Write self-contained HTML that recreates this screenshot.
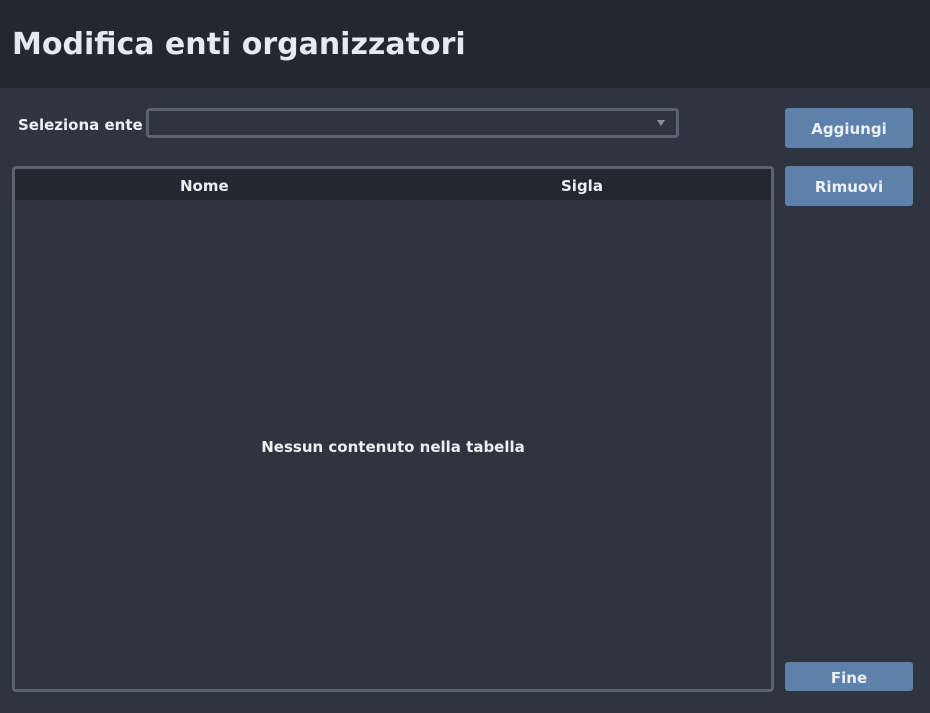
<!DOCTYPE html>
<html><head><meta charset="utf-8"><style>
*{margin:0;padding:0;box-sizing:border-box}
body{width:930px;height:713px;background:#2e3440;font-family:"DejaVu Sans","Liberation Sans",sans-serif;font-weight:bold;color:#eceff4;position:relative;overflow:hidden}
.hdr{position:absolute;left:0;top:0;width:930px;height:88px;background:#242731}
.hdr h1{position:absolute;left:12px;top:25px;font-size:30px;line-height:40px;color:#e5e9f0;font-weight:bold}
.lbl{position:absolute;left:18px;top:116px;font-size:15px;line-height:18px}
.sel{position:absolute;left:146px;top:108px;width:533px;height:30px;border:3px solid #5b6373;border-radius:4px;background:#2e3440}
.arr{position:absolute;left:657px;top:120px;width:0;height:0;border-left:4px solid transparent;border-right:4px solid transparent;border-top:6px solid #8a8f99}
.btn{position:absolute;left:785px;width:128px;background:#5e81ac;border-radius:3px;color:#eceff4;font-size:15px;display:flex;align-items:center;justify-content:center;padding-top:2px}
.tbl{position:absolute;left:12px;top:166px;width:762px;height:526px;border:3px solid #5b6373;border-radius:4px;background:#2e3440;overflow:hidden}
.th{position:absolute;left:0;top:0;width:100%;height:31px;background:#242731;font-size:15px}
.th span{position:absolute;top:8px;line-height:18px}
.empty{position:absolute;left:0;width:100%;top:269px;text-align:center;font-size:15px}
</style></head><body>
<div class="hdr"><h1>Modifica enti organizzatori</h1></div>
<div class="lbl">Seleziona ente</div>
<div class="sel"></div><div class="arr"></div>
<div class="btn" style="top:108px;height:40px">Aggiungi</div>
<div class="btn" style="top:166px;height:40px">Rimuovi</div>
<div class="btn" style="top:662px;height:29px">Fine</div>
<div class="tbl">
<div class="th"><span style="left:165px">Nome</span><span style="left:546px">Sigla</span></div>
<div class="empty">Nessun contenuto nella tabella</div>
</div>
</body></html>
